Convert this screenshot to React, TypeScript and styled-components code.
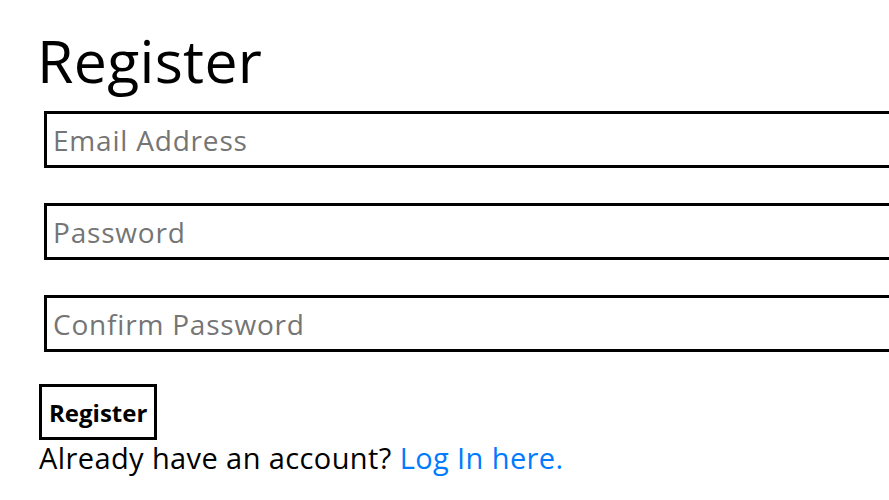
import React from "react";
import styled, { createGlobalStyle } from "styled-components";

const GlobalStyle = createGlobalStyle`
  html, body { margin: 0; padding: 0; background: #ffffff; overflow: hidden; }
  body { font-family: "Open Sans", "DejaVu Sans", sans-serif; color: #000000; }
`;

const Page = styled.main`
  display: flex;
  flex-direction: column;
  align-items: flex-start;
  padding: 25px 0 0 37px;
`;

const Title = styled.h1`
  margin: 0 0 16px 0;
  font-size: 59px;
  font-weight: 400;
  line-height: 70px;
  letter-spacing: 0.3px;
`;

const Form = styled.form`
  display: flex;
  flex-direction: column;
  align-items: flex-start;
  gap: 35px;
`;

const Field = styled.input`
  box-sizing: border-box;
  width: 900px;
  height: 57px;
  margin-left: 7px;
  padding: 0 6px;
  border: 3px solid #000000;
  border-radius: 0;
  outline: none;
  background: #ffffff;
  font-family: "Open Sans", "DejaVu Sans", sans-serif;
  font-size: 28px;
  letter-spacing: 0.8px;
  color: #000000;
  &::placeholder { color: #757575; opacity: 1; }
`;

const Actions = styled.div`
  display: flex;
  flex-direction: column;
  align-items: flex-start;
  margin-top: 32px;
  margin-left: 2px;
`;

const SubmitButton = styled.button`
  box-sizing: border-box;
  height: 56px;
  padding: 0 7px;
  border: 3px solid #000000;
  border-radius: 0;
  background: #ffffff;
  font-family: "Open Sans", "DejaVu Sans", sans-serif;
  font-size: 24px;
  font-weight: 700;
  color: #000000;
  cursor: pointer;
`;

const Note = styled.p`
  margin: 0;
  font-size: 29px;
  letter-spacing: 0.4px;
  line-height: 36px;
`;

const Link = styled.a`
  color: #007bff;
  text-decoration: none;
`;

export default function App() {
  return (
    <>
      <GlobalStyle />
      <Page>
        <Title>Register</Title>
        <Form onSubmit={(e) => e.preventDefault()}>
          <Field type="email" placeholder="Email Address" />
          <Field type="password" placeholder="Password" />
          <Field type="password" placeholder="Confirm Password" />
        </Form>
        <Actions>
          <SubmitButton type="submit">Register</SubmitButton>
          <Note>
            Already have an account? <Link href="#">Log In here.</Link>
          </Note>
        </Actions>
      </Page>
    </>
  );
}
